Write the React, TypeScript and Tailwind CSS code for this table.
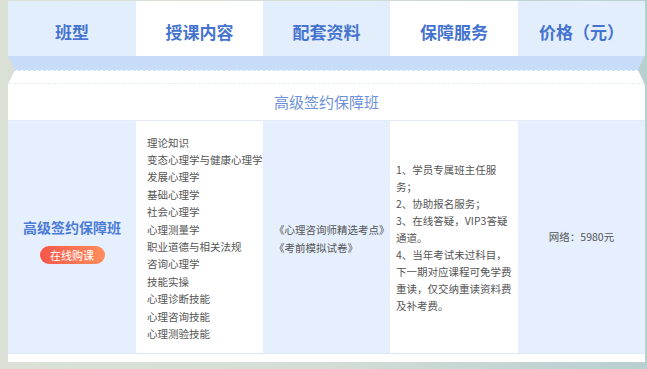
const heads = ['班型', '授课内容', '配套资料', '保障服务', '价格（元）'];

const lessons = [
  '理论知识', '变态心理学与健康心理学', '发展心理学', '基础心理学', '社会心理学', '心理测量学',
  '职业道德与相关法规', '咨询心理学', '技能实操', '心理诊断技能', '心理咨询技能', '心理测验技能',
];

const services = [
  '1、学员专属班主任服务；',
  '2、协助报名服务；',
  '3、在线答疑，VIP3答疑通道。',
  '4、当年考试未过科目，',
  '下一期对应课程可免学费重读，仅交纳重读资料费及补考费。',
];

const cols = 'grid grid-cols-[128px_127px_127px_128px_127px]';

export default function App() {
  return (
    <div className="w-[647px] h-[369px] overflow-hidden bg-gradient-to-r from-[#dbe1d7] via-[#d4ddd6] to-[#b8cfd0] pt-[1px] pl-[8px] font-['Noto_Sans_CJK_SC','Noto_Sans',sans-serif]">
      <div className="relative w-[637px] bg-white">
        {/* header */}
        <div className={`${cols} h-[55px]`}>
          {heads.map((h, i) => (
            <div
              key={h}
              className={`flex items-center justify-center pt-[6px] text-[17px] font-bold text-[#4574cf] ${i % 2 === 0 ? 'bg-[#e3eefc]' : 'bg-white'}`}
            >
              {h}
            </div>
          ))}
        </div>
        <div className="h-[14px] bg-[#c7dcf9]" />
        <div className="h-[14px] border-t border-dashed border-[#d2e2f8] border-b border-b-[#e3ecf6]" />

        {/* side notches */}
        <svg className="absolute left-0 top-[54px]" width="8" height="30" viewBox="0 0 8 30">
          <polygon points="0,0 7,15 0,29" fill="#d9dfd5" />
        </svg>
        <svg className="absolute right-0 top-[54px]" width="8" height="31" viewBox="0 0 8 31">
          <polygon points="8,0 1,15 8,30" fill="#b9d0d1" />
        </svg>

        {/* title */}
        <div className="h-[37px] flex items-center justify-center text-[15px] text-[#6d91d8] border-b border-[#e3ecf6]">
          高级签约保障班
        </div>

        {/* body */}
        <div className={`${cols} h-[232px] text-[10.5px] text-[#555]`}>
          <div className="bg-[#e6effd] flex flex-col items-center justify-center pt-[7px]">
            <div className="text-[14px] font-bold text-[#4a7bd6] leading-[20px]">高级签约保障班</div>
            <div className="mt-[9px] w-[65px] h-[18px] rounded-full bg-gradient-to-r from-[#f5564a] to-[#ff8d5d] text-white text-[11px] flex items-center justify-center">
              在线购课
            </div>
          </div>
          <div className="bg-white flex flex-col justify-center pl-[11px] leading-[17.4px] whitespace-nowrap pt-[2px]">
            {lessons.map((l) => (
              <div key={l}>{l}</div>
            ))}
          </div>
          <div className="bg-[#e6effd] flex flex-col justify-center pl-[11px] leading-[17.4px] whitespace-nowrap pt-[3px]">
            <div>《心理咨询师精选考点》</div>
            <div>《考前模拟试卷》</div>
          </div>
          <div className="bg-white flex flex-col justify-center pl-[6px] pr-[4px] leading-[17px]">
            {services.map((s) => (
              <div key={s}>{s}</div>
            ))}
          </div>
          <div className="bg-[#e6effd] flex items-center justify-center">网络：5980元</div>
        </div>
        <div className="h-[9px] border-t border-[#dce8f6] bg-white" />
      </div>
    </div>
  );
}
